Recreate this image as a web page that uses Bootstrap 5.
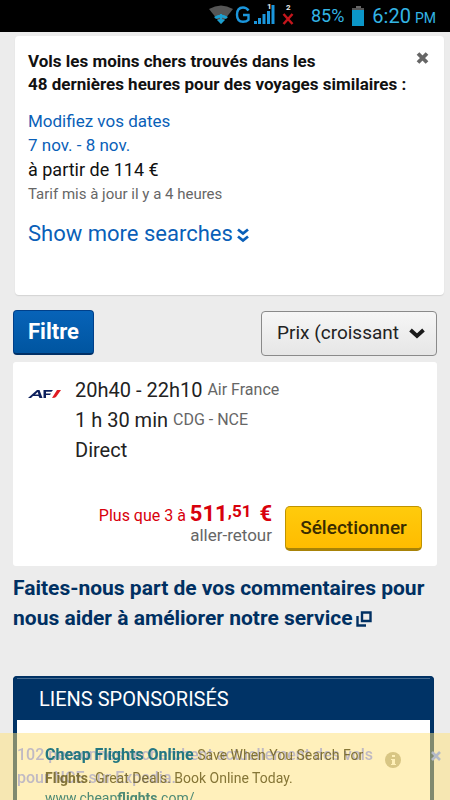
<!DOCTYPE html>
<html lang="fr">
<head>
<meta charset="utf-8">
<meta name="viewport" content="width=device-width, initial-scale=1">
<title>Vols</title>
<link href="https://cdn.jsdelivr.net/npm/bootstrap@5.3.0/dist/css/bootstrap.min.css" rel="stylesheet">
<style>
body{font-family:Roboto,"Liberation Sans",sans-serif;background:#ececec;color:#111}
a{text-decoration:none}
.app{height:100vh}
.statusbar{height:32px;background:#000;color:#33b5e5;font-size:20px;line-height:32px;padding-right:14px}
.statusbar .pm{font-size:14px}
.statusbar .level{font-size:18px;margin-left:15px}
.results{padding:4px 13px 0}
.deals{margin:0 -7px 0 2px;background:#fff;border-radius:4px;box-shadow:0 1px 1px #d4d4d4;padding:14px 13px 46px}
.deals h2{font-size:17px;line-height:23px;font-weight:700;color:#111;margin:0 0 13px}
.deals a{color:#0a5fb8}
.dates{font-size:17px;line-height:24px}
.from{font-size:18px;line-height:26px}
.updated{font-size:15px;line-height:22px;color:#666}
.more{font-size:22px;line-height:30px;margin-top:14px}
.close-btn{margin:2px 2px 0 0;line-height:0}
.toolbar{padding-top:15px}
.filter-btn{height:45px;width:81px;font-size:22px;line-height:40px;font-weight:700;color:#fff;background:linear-gradient(#0763b8,#0055a0);border:1px solid #00408a;border-bottom:2px solid #003066;border-radius:4px}
.sort{width:176px;margin-top:1px}
.sort select{appearance:none;width:100%;height:45px;font-size:19px;color:#222;background:linear-gradient(#f6f6f6,#e6e6e6);border:1px solid #8a8a8a;border-radius:4px;padding:0 30px 0 15px;text-overflow:clip}
.sort svg{position:absolute;right:12px;top:17px;pointer-events:none}
.flight{background:#fff;border-radius:3px;margin:6px 0 0;padding:13px 15px 15px}
.info{font-size:20px;line-height:30px;color:#222}
.info span{font-size:16px;color:#666;vertical-align:2px}
.logo-cell{width:47px;padding-top:14px;line-height:0}
.offer{margin-top:41px}
.amount{margin-right:13px}
.price{color:#d8000c;font-size:16px;line-height:18px}
.price b{font-size:22px;line-height:16px}
.price .cents{font-size:17px;vertical-align:4px;line-height:10px}
.trip{font-size:17px;line-height:20px;color:#666}
.select-btn{width:137px;height:45px;font-size:19px;line-height:38px;font-weight:500;color:#3a2c00;background:linear-gradient(#ffcb0c,#ffbc00);border:1px solid #bf9300;border-bottom:3px solid #a88308;border-radius:5px}
.feedback{font-size:21px;line-height:30px;font-weight:700;color:#003062;padding-top:7px}
.sponsored{border:4px solid #003366;border-top-width:1px;outline:1px solid #003062;outline-offset:-1px;border-radius:4px;background:#fff;margin:43px 3px 0 0;height:200px}
.sponsored h3{font-size:20px;line-height:41px;font-weight:400;color:#fff;background:#003366;border-top:1px solid #476b8f;margin:0;padding:0 22px}
.sponsored .inner-top{background:#003366;padding-top:1px}
.overlay{left:0;right:0;bottom:0;height:67px;background:rgba(255,225,120,.5);overflow:hidden}
.notice{position:absolute;left:17px;right:9px;top:10px;font-size:16px;line-height:23px;font-weight:500;color:rgba(176,172,198,.8)}
.ad{position:relative;padding:10px 46px 0 45px;font-size:14px;line-height:23px;color:rgba(112,96,32,.85)}
.ad strong{font-size:16px;font-weight:700;color:#237781}
.ad a{color:#4d8a75;line-height:17px}
.ad .ad-info{position:absolute;left:385px;top:19px;line-height:0}
</style>
</head>
<body>
<div class="app overflow-hidden">
<header class="statusbar d-flex align-items-center justify-content-end">
<svg width="88" height="32" viewBox="0 0 88 32" aria-hidden="true">
<path d="M1 9Q13 2 25 9L13 24Z" fill="#555"/>
<path d="M6 17q7-5 14 0l-2 2q-5-3-10 0zM9 20q4-2 8 0l-4 4z" fill="#1b9fd0"/><path d="M12 14h2v5h-2z" fill="#1b9fd0"/>
<path d="M40.500 10.500q-2-3-5.500-3-6 0-6 7.300 0 7 6 7 3.500 0 5.500-2V15H35" fill="none" stroke="#1b96dc" stroke-width="2.400"/>
<path d="M46 24v-3h3v3zM50 24v-6h3v6zM54.500 24V14h3v10zM59 24v-13h3v13zM63.500 24V5h3v19z" fill="#1b96dc"/>
<path d="M75.500 14l9 10M84.500 14l-9 10" stroke="#c4161c" stroke-width="2.500"/>
<text x="59" y="9" font-size="8" font-weight="700" fill="#eee" font-family="Roboto">1</text>
<text x="78" y="10" font-size="8" font-weight="700" fill="#eee" font-family="Roboto">2</text>
</svg>
<span class="level">85%</span>
<svg class="ms-2" width="12" height="20" viewBox="0 0 12 20" aria-hidden="true"><path d="M4 0h5v2H4z" fill="#666"/><path d="M0 2h12v2H0z" fill="#555"/><path d="M0 4h12v16H0z" fill="#0b96c8"/></svg>
<span class="ms-2">6:20</span><span class="pm ms-1 mt-1">PM</span>
</header>
<main class="results">
<section class="deals">
<div class="d-flex justify-content-between align-items-start">
<h2>Vols les moins chers trouvés dans les<br>48 dernières heures pour des voyages similaires :</h2>
<button type="button" class="close-btn btn p-0 border-0" aria-label="Fermer"><svg width="13" height="12" viewBox="0 0 13 12"><path d="M2 1.500l9 9M11 1.500l-9 9" stroke="#666" stroke-width="3.800"/></svg></button>
</div>
<div class="dates"><a href="#">Modifiez vos dates</a><br><a href="#">7 nov. - 8 nov.</a></div>
<div class="from">à partir de 114 €</div>
<div class="updated">Tarif mis à jour il y a 4 heures</div>
<div class="more"><a href="#">Show more searches<svg class="ms-1" width="12" height="15" viewBox="0 0 12 15" aria-hidden="true"><path d="M1 1.500l5 4 5-4M1 8.500l5 4 5-4" fill="none" stroke="#0a5fb8" stroke-width="2.800"/></svg></a></div>
</section>
<div class="toolbar d-flex justify-content-between">
<button type="button" class="filter-btn btn p-0">Filtre</button>
<div class="sort position-relative"><select aria-label="Trier"><option>Prix (croissant</option></select><svg width="16" height="11" viewBox="0 0 16 11" aria-hidden="true"><path d="M1.500 2L8 8 14.500 2" fill="none" stroke="#1a1a1a" stroke-width="3.800"/></svg></div>
</div>
<article class="flight">
<div class="d-flex">
<div class="logo-cell"><svg width="34" height="10" viewBox="0 0 34 10" role="img" aria-label="AF"><path d="M0 9L9 1h2.500l3 8h-3l-1-2H5L3 9zM7 5.500h3.500L9.700 3zM15.500 9V1h9.500l-1.500 1.700h-5.500v1.800h5l-1 1.500h-4V9z" fill="#0c1f5c"/><path d="M24 9l5-8h4l-5 7q-1 1-4 1z" fill="#e01b22"/></svg></div>
<div class="info"><div>20h40 - 22h10 <span>Air France</span></div><div>1 h 30 min <span>CDG - NCE</span></div><div>Direct</div></div>
</div>
<div class="offer d-flex justify-content-end align-items-start">
<div class="amount text-end"><div class="price">Plus que 3 à <b>511</b><b class="cents">,51</b>&nbsp; <b>€</b></div><div class="trip">aller-retour</div></div>
<button type="button" class="select-btn btn p-0">Sélectionner</button>
</div>
</article>
<div class="feedback"><a href="#" class="text-reset">Faites-nous part de vos commentaires pour nous aider à améliorer notre service<svg class="ms-1" width="16" height="16" viewBox="0 0 16 16" aria-hidden="true"><path d="M6 1.500h8.500V10H6zM1.500 5v9.500H10" fill="none" stroke="#003062" stroke-width="2.400"/></svg></a></div>
<section class="sponsored"><div class="inner-top"><h3>LIENS SPONSORISÉS</h3></div></section>
</main>
</div>
<aside class="overlay position-fixed">
<div class="notice d-flex justify-content-between align-items-start"><span>102 personnes recherchent actuellement des vols<br>pour NCE sur Expedia.</span><button type="button" class="btn p-0 border-0" aria-label="Fermer"><svg width="10" height="10" viewBox="0 0 10 10"><path d="M1 1l8 8M9 1l-8 8" stroke="#b4bac6" stroke-width="2.600"/></svg></button></div>
<div class="ad"><div><strong>Cheap Flights Online</strong> Save When You Search For</div><div><b>Flights</b>. Great Deals. Book Online Today.</div><a class="d-block" href="#">www.cheap<b>flights</b>.com/</a>
<span class="ad-info"><svg width="16" height="16" viewBox="0 0 16 16" aria-hidden="true"><circle cx="8" cy="8" r="8" fill="#d8c684"/><path d="M7 3h3v2H7zM6 7h4v5h1v1H6v-1h1V8H6z" fill="#fff0b8"/></svg></span></div>
</aside>
<script src="https://cdn.jsdelivr.net/npm/bootstrap@5.3.0/dist/js/bootstrap.bundle.min.js"></script>
</body>
</html>
